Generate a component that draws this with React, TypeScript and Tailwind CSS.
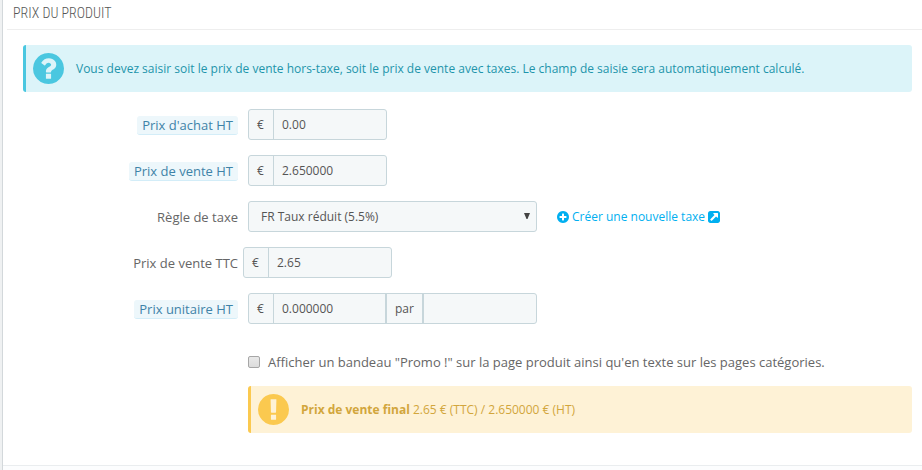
import type { ReactNode } from "react";

const ICONS = {
  question:
    "M1024 1376v-192q0-14-9-23t-23-9h-192q-14 0-23 9t-9 23v192q0 14 9 23t23 9h192q14 0 23-9t9-23zm256-672q0-88-55.5-163t-138.5-116-170-41q-243 0-371 213-15 24 8 42l132 100q7 6 19 6 16 0 25-12 53-68 86-92 34-24 86-24 48 0 85.5 26t37.5 59q0 38-20 61t-68 45q-63 28-115.5 86.5t-52.5 125.5v36q0 14 9 23t23 9h192q14 0 23-9t9-23q0-19 21.5-49.5t54.5-49.5q32-18 49-28.5t46-35 44.5-48 28-60.5 12.5-81zm384 192q0 209-103 385.5t-279.5 279.5-385.5 103-385.5-103-279.5-279.5-103-385.5 103-385.5 279.5-279.5 385.5-103 385.5 103 279.5 279.5 103 385.5z",
  exclamation:
    "M896 128q209 0 385.5 103t279.5 279.5 103 385.5-103 385.5-279.5 279.5-385.5 103-385.5-103-279.5-279.5-103-385.5 103-385.5 279.5-279.5 385.5-103zm128 1247v-190q0-14-9-23.5t-22-9.5h-192q-13 0-23 10t-10 23v190q0 13 10 23t23 10h192q13 0 22-9.5t9-23.5zm-2-344l18-621q0-12-10-18-10-8-24-8h-220q-14 0-24 8-10 6-10 18l17 621q0 10 10 17.5t24 7.5h185q14 0 23.5-7.5t10.5-17.5z",
  plus:
    "M1344 960v-128q0-26-19-45t-45-19h-256v-256q0-26-19-45t-45-19h-128q-26 0-45 19t-19 45v256h-256q-26 0-45 19t-19 45v128q0 26 19 45t45 19h256v256q0 26 19 45t45 19h128q26 0 45-19t19-45v-256h256q26 0 45-19t19-45zm320-64q0 209-103 385.5t-279.5 279.5-385.5 103-385.5-103-279.5-279.5-103-385.5 103-385.5 279.5-279.5 385.5-103 385.5 103 279.5 279.5 103 385.5z",
  external:
    "M1408 928v-480q0-26-19-45t-45-19h-480q-42 0-59 39-17 41 14 70l144 144-534 534q-19 19-19 45t19 45l102 102q19 19 45 19t45-19l534-534 144 144q18 19 45 19 12 0 25-5 39-17 39-59zm256-512v960q0 119-84.5 203.5t-203.5 84.5h-960q-119 0-203.5-84.5t-84.5-203.5v-960q0-119 84.5-203.5t203.5-84.5h960q119 0 203.5 84.5t84.5 203.5z",
};

function Icon({ name, className }: { name: keyof typeof ICONS; className: string }) {
  return (
    <svg viewBox="128 128 1536 1536" fill="currentColor" aria-hidden="true" className={className}>
      <path d={ICONS[name]} />
    </svg>
  );
}

function Row({ id, label, hint, children }: { id: string; label: string; hint?: boolean; children: ReactNode }) {
  return (
    <div className="flex items-start">
      <div className="flex w-[215px] shrink-0 justify-end pt-[7px]">
        <label
          htmlFor={id}
          className={
            hint
              ? "rounded-[3px] border-b border-[#d3edf8] bg-[#edf7fb] px-[5px] text-[13px] leading-[18px] text-[#3f83a8]"
              : "text-[13px] leading-[18px] text-[#666666]"
          }
        >
          {label}
        </label>
      </div>
      {children}
    </div>
  );
}

function PriceField({ id, value }: { id: string; value: string }) {
  return (
    <>
      <span className="flex w-6 shrink-0 items-center pl-2">€</span>
      <input
        id={id}
        type="text"
        defaultValue={value}
        className="w-full min-w-0 border-l border-[#c7d6db] px-2 text-[#555555] outline-none"
      />
    </>
  );
}

const group = "flex h-[31px] rounded-[3px] border border-[#c7d6db] bg-[#f5f8f9] text-xs";

export default function App() {
  return (
    <div className="min-h-screen bg-[#eff1f2] pl-[2px] font-['Open_Sans',sans-serif] text-xs text-[#555555]">
      <div className="min-h-screen border-l border-[#d3d8db] bg-[#fcfdfe]">
        <form className="border-b border-[#eaedef] bg-white pb-8">
          <h3 className="ml-1 h-[30px] border-b border-[#eeeeee] pt-1 pl-[6px] font-['Ubuntu_Condensed','Roboto_Condensed','Arial_Narrow',sans-serif] text-sm leading-[18px] font-light uppercase">
            Prix du produit
          </h3>

          <div className="pt-[15px] pr-[10px] pl-5">
            <div className="flex h-[47px] items-center gap-3 rounded-[3px] border-l-[3px] border-[#4ac7e0] bg-[#dcf4f9] pl-[7px] text-[#1e94ab]">
              <Icon name="question" className="size-[31px] shrink-0 text-[#4ac7e0]" />
              <p>
                Vous devez saisir soit le prix de vente hors-taxe, soit le prix de vente avec taxes. Le champ de
                saisie sera automatiquement calculé.
              </p>
            </div>

            <div className="mt-[17px] flex flex-col gap-[15px]">
              <Row id="wholesale" label="Prix d'achat HT" hint>
                <div className={`${group} ml-[10px] w-[139px]`}>
                  <PriceField id="wholesale" value="0.00" />
                </div>
              </Row>

              <Row id="price-ht" label="Prix de vente HT" hint>
                <div className={`${group} ml-[10px] w-[139px]`}>
                  <PriceField id="price-ht" value="2.650000" />
                </div>
              </Row>

              <Row id="tax-rule" label="Règle de taxe">
                <div className="relative ml-[10px] w-[289px]">
                  <select
                    id="tax-rule"
                    className="h-[31px] w-full appearance-none rounded-[3px] border border-[#c7d6db] bg-[#f5f8f9] pr-6 pl-3 text-xs text-[#555555] outline-none"
                  >
                    <option>FR Taux réduit (5.5%)</option>
                  </select>
                  <svg
                    viewBox="0 0 6 6"
                    aria-hidden="true"
                    className="pointer-events-none absolute top-3 right-[7px] size-[6px] fill-[#444444]"
                  >
                    <path d="M0 0h6L3.5 6h-1z" />
                  </svg>
                </div>
                <a href="#" className="ml-5 flex h-[31px] items-center gap-[3px] text-[#00aff0]">
                  <Icon name="plus" className="size-3" />
                  Créer une nouvelle taxe
                  <Icon name="external" className="size-3" />
                </a>
              </Row>

              <Row id="price-ttc" label="Prix de vente TTC">
                <div className={`${group} ml-[5px] w-[149px]`}>
                  <PriceField id="price-ttc" value="2.65" />
                </div>
              </Row>

              <Row id="unit-price" label="Prix unitaire HT" hint>
                <div className={`${group} ml-[10px] w-[289px]`}>
                  <div className="flex w-[136px] shrink-0">
                    <PriceField id="unit-price" value="0.000000" />
                  </div>
                  <span className="flex shrink-0 items-center border-x-2 border-[#c7d6db] px-2">par</span>
                  <input
                    type="text"
                    aria-label="Unité"
                    className="w-full min-w-0 px-2 text-[#555555] outline-none"
                  />
                </div>
              </Row>
            </div>

            <div className="ml-[225px] pt-[29px]">
              <label className="flex items-center gap-2 text-[13px] leading-[18px] text-[#666666]">
                <input
                  type="checkbox"
                  className="size-3 shrink-0 appearance-none rounded-[2px] border border-[#a6a6a6] bg-linear-to-b from-[#e9e9e9] to-[#dcdcdc]"
                />
                Afficher un bandeau "Promo !" sur la page produit ainsi qu'en texte sur les pages catégories.
              </label>

              <div className="mt-[15px] flex h-[47px] items-center gap-3 rounded-[3px] border-l-[3px] border-[#fbc94f] bg-[#fef2d6] pl-[7px] text-[#d2a63c]">
                <Icon name="exclamation" className="size-[31px] shrink-0 text-[#fbc94f]" />
                <p>
                  <strong className="font-bold">Prix de vente final</strong> 2.65 € (TTC) / 2.650000 € (HT)
                </p>
              </div>
            </div>
          </div>
        </form>
      </div>
    </div>
  );
}
